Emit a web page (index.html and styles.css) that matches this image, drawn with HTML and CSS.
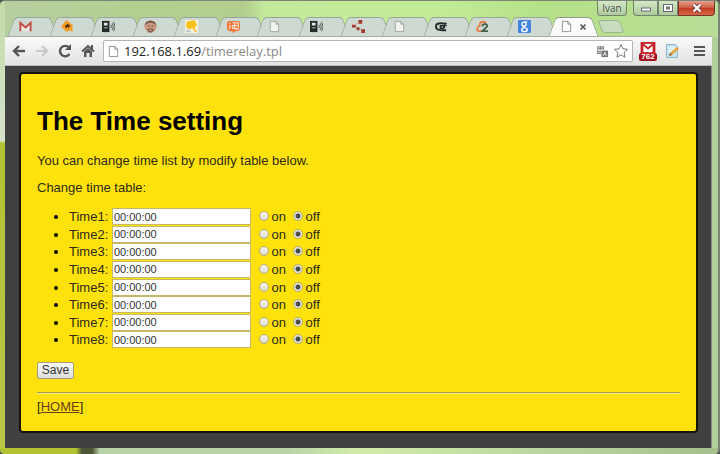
FILE: index.html
```
<!DOCTYPE html>
<html lang="en">
<head>
  <meta charset="UTF-8">
  <meta name="viewport" content="width=device-width, initial-scale=1.0">
  <title>Time setting</title>
  <link rel="stylesheet" href="styles.css">
</head>
<body>
  <div class="window">
    <div class="window-controls">
      <button class="user">Ivan</button>
      <div class="caption-buttons">
        <button aria-label="Minimize"><svg width="12" height="10" viewBox="0 0 12 10"><rect x="1.500" y="5" width="9" height="3" fill="#fff" stroke="#667" /></svg></button>
        <button class="maximize" aria-label="Maximize"><svg width="12" height="10" viewBox="0 0 12 10"><rect x="1.500" y="1.500" width="9" height="7" fill="#fff" stroke="#667" /><rect x="4.500" y="4" width="3" height="2" fill="#9b9" stroke="#667" /></svg></button>
        <button class="close" aria-label="Close"><svg width="12" height="10" viewBox="0 0 12 10"><path d="M2.500 1.500l7 7m0-7l-7 7" stroke="#744" stroke-width="4" /><path d="M2.500 1.500l7 7m0-7l-7 7" stroke="#fff" stroke-width="2.200" /></svg></button>
      </div>
    </div>

    <div class="tab-strip">
      <div class="tab"><svg viewBox="0 0 14 14"><path d="M1.500 12V3L7 8l5.500-5v9" fill="#e8e8e4" stroke="#c4483c" stroke-width="2" /></svg></div>
      <div class="tab"><svg viewBox="0 0 14 14"><path d="M6 0l7 6-1 2 1 5-4-2-3 2-6-6z" fill="#f29a26" /><path d="M4 7l3-3 3 2-2 3-1-2-1 2z" fill="#5a3010" /></svg></div>
      <div class="tab"><svg viewBox="0 0 14 14"><path d="M0 1h8v12H0z" fill="#222b28" /><path d="M2 3h4v3H2zM2 8h4v1H2z" fill="#dfe8e4" /><path d="M9.500 5q1.500 2 0 4M11 3.500q2.500 3.500 0 7M12.500 2q3 5 0 10" fill="none" stroke="#4a5450" /></svg></div>
      <div class="tab"><svg viewBox="0 0 14 14"><circle cx="7" cy="7" r="6.500" fill="#cf9b80" /><path d="M.5 7Q1 .5 7 .5T13.500 7q-2-4-6.500-4T.5 7z" fill="#75594c" /><path d="M4 6.500h2m2 0h2" stroke="#604034" /><path d="M3 10q4-2 8 0l-2 3.500H5z" fill="#85604f" /><path d="M5 11h4" stroke="#d8a892" /></svg></div>
      <div class="tab"><svg viewBox="0 0 14 14"><path d="M0 0h14v14H0z" fill="#f3f0dc" /><path d="M2 2l8-2 3 5-3 4 3 3-2 1-3-4-5 1-2-4z" fill="#f7c21c" /><path d="M1 11h5v2H1z" fill="#b8c8cc" /></svg></div>
      <div class="tab"><svg viewBox="0 0 14 14"><path d="M2 1h10q2 0 2 3v5q0 3-3 3H9l-3 2v-2H3q-3 0-3-3V4q0-3 2-3z" fill="#ef7435" /><path d="M2 3l2 1M2 6l2 1-2 3M6 3h6v7H9M5 6h6M8 4v5M6 7v2h4" fill="none" stroke="#fff" /></svg></div>
      <div class="tab"><svg viewBox="0 0 14 14"><path d="M2.500 1.500h6l3 3v8h-9zM8.500 1.500v3h3" fill="#f1f3ee" stroke="#a0a8a3" /></svg></div>
      <div class="tab"><svg viewBox="0 0 14 14"><path d="M0 1h8v12H0z" fill="#222b28" /><path d="M2 3h4v3H2zM2 8h4v1H2z" fill="#dfe8e4" /><path d="M9.500 5q1.500 2 0 4M11 3.500q2.500 3.500 0 7M12.500 2q3 5 0 10" fill="none" stroke="#4a5450" /></svg></div>
      <div class="tab"><svg viewBox="0 0 14 14"><path d="M2 6l7-4M2 6l4 3 6 2" stroke="#d3b0aa" /><path d="M0 5h4v3H0zM7 0h4v4H7zM5 8h3v3H5zM10 10h4v4h-4z" fill="#a33a30" /></svg></div>
      <div class="tab"><svg viewBox="0 0 14 14"><path d="M2.500 1.500h6l3 3v8h-9zM8.500 1.500v3h3" fill="#f1f3ee" stroke="#a0a8a3" /></svg></div>
      <div class="tab"><svg viewBox="0 0 14 14"><path d="M12 4Q1 2 1 7t11 4M10 9V6H6v3h4" fill="none" stroke="#252b29" stroke-width="2" /><path d="M8 4h5M9 6h4" stroke="#252b29" /></svg></div>
      <div class="tab"><svg viewBox="0 0 14 14"><path d="M6 12H3q-3-1-1-4 1-2 2-2 0-5 5-4l2 2" fill="none" stroke="#e47b45" stroke-width="2" /><path d="M7 7q0-3 3-2.500 3 .5 1.500 3L7 12h6" fill="none" stroke="#43604a" stroke-width="2" /></svg></div>
      <div class="tab"><svg viewBox="0 0 14 14"><rect width="14" height="14" rx="1" fill="#4583e0" /><circle cx="6.500" cy="4.500" r="2.200" fill="none" stroke="#fff" stroke-width="1.500" /><path d="M7 7q-2 0-.5 1.200M10 2H7" fill="none" stroke="#fff" stroke-width="1.500" /><ellipse cx="7" cy="10.500" rx="3" ry="2" fill="none" stroke="#fff" stroke-width="1.500" /></svg></div>
      <div class="tab active">
        <svg viewBox="0 0 14 14"><path d="M2.500 1.500h6l3 3v8h-9zM8.500 1.500v3h3" fill="#fff" stroke="#8c8c8c" /></svg>
        <button class="tab-close" aria-label="Close tab"><svg viewBox="0 0 8 8"><path d="M1.500 1.500l5 5m0-5l-5 5" stroke="#555" stroke-width="1.600" /></svg></button>
      </div>
      <button class="new-tab" aria-label="New tab"></button>
    </div>

    <div class="toolbar">
      <button aria-label="Back"><svg viewBox="0 0 16 16"><path d="M14 8H3M8 3L3 8l5 5" fill="none" stroke="#555" stroke-width="2.400" /></svg></button>
      <button aria-label="Forward"><svg viewBox="0 0 16 16"><path d="M2 8h11M8 3l5 5-5 5" fill="none" stroke="#c8c8c8" stroke-width="2.200" /></svg></button>
      <button aria-label="Reload"><svg viewBox="0 0 16 16"><path d="M12.500 11A5.200 5.200 0 1 1 12 4.500" fill="none" stroke="#555" stroke-width="2.400" /><path d="M14 1v6H8z" fill="#555" /></svg></button>
      <button aria-label="Home"><svg viewBox="0 0 16 16"><path d="M2 8.500L8 3l6 5.500M12 6V2" fill="none" stroke="#555" stroke-width="2" /><path d="M4 8.500L8 5l4 3.500V14H9.500v-4h-3v4H4z" fill="#555" /></svg></button>
      <div class="address-bar">
        <svg class="page-icon" viewBox="0 0 14 14"><path d="M2.500 1.500h6l3 3v8h-9zM8.500 1.500v3h3" fill="#fff" stroke="#8c8c8c" /></svg>
        <div class="url">192.168.1.69<span>/timerelay.tpl</span></div>
        <svg viewBox="0 0 14 14"><path d="M7 9H2V2h6v3M3 4h4M5 2v3M3 7h3" fill="none" stroke="#888" stroke-width="1.400" /><path d="M6 6h7v7H6z" fill="#777" /><path d="M8 11.500L9.500 8l1.500 3.500" fill="none" stroke="#fff" /></svg>
        <svg class="star" viewBox="0 0 16 16"><path d="M8 1.500l1.900 4.300 4.600.5-3.400 3.200.9 4.700L8 11.900l-4 2.300.9-4.700L1.500 6.300l4.600-.5z" fill="#fff" stroke="#777" /></svg>
      </div>
      <button class="mail" aria-label="Mail, 762 unread">
        <svg viewBox="0 0 16 13"><path d="M0 0h16v13H0z" fill="#c6202a" /><path d="M2 2h12v9H2z" fill="#fff" /><path d="M2 12V2l6 5 6-5v10" fill="none" stroke="#c6202a" stroke-width="2" /></svg>
        <span>762</span>
      </button>
      <button aria-label="Notes"><svg viewBox="0 0 16 16"><path d="M2.500 1.500h9l2 2v11h-11z" fill="#c7e4f3" stroke="#8fb6cb" /><path d="M4 5h7M4 8h7" stroke="#f4fbff" stroke-width="1.500" /><path d="M5 13l1-3 7-6 2 2-7 6z" fill="#e9a63c" /><path d="M5 13l1-3 2 2z" fill="#75624a" /></svg></button>
      <button class="menu" aria-label="Menu"><svg viewBox="0 0 16 16"><path d="M3 4h11M3 8h11M3 12h11" stroke="#555" stroke-width="2" /></svg></button>
    </div>

    <div class="page">
      <main class="card">
        <h1>The Time setting</h1>
        <p>You can change time list by modify table below.</p>
        <p>Change time table:</p>
        <form>
          <ul>
            <li>
              <label for="time1">Time1:</label>
              <input type="text" id="time1" value="00:00:00">
              <label class="choice"><input type="radio" name="relay1">on</label>
              <label class="choice"><input type="radio" name="relay1" checked>off</label>
            </li>
            <li>
              <label for="time2">Time2:</label>
              <input type="text" id="time2" value="00:00:00">
              <label class="choice"><input type="radio" name="relay2">on</label>
              <label class="choice"><input type="radio" name="relay2" checked>off</label>
            </li>
            <li>
              <label for="time3">Time3:</label>
              <input type="text" id="time3" value="00:00:00">
              <label class="choice"><input type="radio" name="relay3">on</label>
              <label class="choice"><input type="radio" name="relay3" checked>off</label>
            </li>
            <li>
              <label for="time4">Time4:</label>
              <input type="text" id="time4" value="00:00:00">
              <label class="choice"><input type="radio" name="relay4">on</label>
              <label class="choice"><input type="radio" name="relay4" checked>off</label>
            </li>
            <li>
              <label for="time5">Time5:</label>
              <input type="text" id="time5" value="00:00:00">
              <label class="choice"><input type="radio" name="relay5">on</label>
              <label class="choice"><input type="radio" name="relay5" checked>off</label>
            </li>
            <li>
              <label for="time6">Time6:</label>
              <input type="text" id="time6" value="00:00:00">
              <label class="choice"><input type="radio" name="relay6">on</label>
              <label class="choice"><input type="radio" name="relay6" checked>off</label>
            </li>
            <li>
              <label for="time7">Time7:</label>
              <input type="text" id="time7" value="00:00:00">
              <label class="choice"><input type="radio" name="relay7">on</label>
              <label class="choice"><input type="radio" name="relay7" checked>off</label>
            </li>
            <li>
              <label for="time8">Time8:</label>
              <input type="text" id="time8" value="00:00:00">
              <label class="choice"><input type="radio" name="relay8">on</label>
              <label class="choice"><input type="radio" name="relay8" checked>off</label>
            </li>
          </ul>
          <button class="save">Save</button>
        </form>
        <hr>
        <div class="footer">[<a href="#">HOME</a>]</div>
      </main>
    </div>
  </div>
</body>
</html>
```
FILE: styles.css
```
* {
  box-sizing: border-box;
}

body {
  margin: 0;
  background: #4a5048;
  font-family: "Liberation Sans", Arial, sans-serif;
  font-size: 13px;
}

button {
  padding: 0;
  border: none;
  background: none;
  font-family: inherit;
}

svg {
  display: block;
}

/* Window frame */
.window {
  display: flex;
  flex-direction: column;
  min-height: 100vh;
  padding: 0 6px 6px 5px;
  border: solid #7c8478;
  border-width: 1px 2px 0 0;
  border-radius: 5px;
  background:
    linear-gradient(90deg, #b3c233 76px, #4d5636 82px, #4d5636 92px, #b9d4a8 100px, #b9d4a8 40%, #d3eca9 50%, #c0dba2 70%, #a5bf8c) left bottom / 100% 6px no-repeat,
    linear-gradient(#c3dba6 0, #d5e2cd 140px, #b3c233 142px, #b8c64a 100%) left top / 5px 100% no-repeat,
    linear-gradient(90deg, #b7cfa0, #b3d08f 20%, #b3cd8f 34%, #c3ea9b 37%, #c3ec98 60%, #b5e188 75%, #b9de97) left top / 100% 36px no-repeat,
    #b2cf9a;
}

.window-controls {
  display: flex;
  justify-content: flex-end;
  gap: 6px;
  height: 16px;
  margin-right: -3px;
}

.window-controls button {
  height: 15px;
  border: 1px solid #71836b;
  border-top: none;
  background: linear-gradient(#d3e8c6, #aecb9b);
}

.window-controls .user {
  width: 30px;
  border-radius: 0 0 4px 4px;
  color: #39442f;
  font-family: "Open Sans", sans-serif;
  font-size: 10px;
  line-height: 12px;
  text-shadow: 0 0 2px #fff;
}

.caption-buttons {
  display: flex;
}

.caption-buttons button {
  display: flex;
  align-items: center;
  justify-content: center;
  width: 25px;
}

.caption-buttons button:first-child {
  border-bottom-left-radius: 4px;
}

.caption-buttons .maximize {
  width: 20px;
}

.caption-buttons .close {
  width: 37px;
  border-color: #7a352b;
  border-bottom-right-radius: 4px;
  background: linear-gradient(#e3a08e, #cf5a41 50%, #c23a20 50%, #d8694a);
}

/* Tabs */
.tab-strip {
  display: flex;
  height: 19px;
  padding: 0 118px 0 7px;
}

.tab {
  position: relative;
  display: flex;
  flex: 1;
  align-items: center;
  padding-left: 7px;
}

.tab::before,
.tab::after {
  content: "";
  position: absolute;
  top: 0;
  bottom: 0;
  border-top: 1px solid #97a69b;
  background: #ced9d2;
}

.tab::before {
  left: -1px;
  right: 30%;
  border-left: 1px solid #97a69b;
  border-top-left-radius: 4px;
  transform: skewX(-20deg);
}

.tab::after {
  left: 30%;
  right: -1px;
  border-right: 1px solid #97a69b;
  border-top-right-radius: 4px;
  transform: skewX(20deg);
}

.tab.active::before,
.tab.active::after {
  border-color: #8f9b8c;
  background: #fafafa;
}

.tab svg {
  position: relative;
  z-index: 1;
  width: 13px;
  height: 13px;
}

.tab .tab-close {
  position: relative;
  z-index: 1;
  margin-left: 6px;
}

.tab .tab-close svg {
  width: 8px;
  height: 8px;
}

.new-tab {
  width: 22px;
  height: 13px;
  margin: 3px -28px 0 6px;
  border: 1px solid #9db58f;
  border-radius: 3px;
  background: #c9dcc0;
  transform: skewX(20deg);
}

/* Toolbar */
.toolbar {
  display: flex;
  align-items: center;
  height: 30px;
  padding: 0 5px 0 6px;
  border-top: 1px solid #a4ada0;
  border-bottom: 1px solid #b9b9b9;
  background: linear-gradient(#fafafa, #e2e2e2);
}

.toolbar > button {
  margin-right: 7px;
}

.toolbar > button svg {
  width: 16px;
  height: 16px;
}

.address-bar {
  display: flex;
  flex: 1;
  align-items: center;
  gap: 4px;
  height: 22px;
  margin-right: 6px;
  padding: 0 3px;
  border: 1px solid #b5b5b5;
  border-radius: 2px;
  background: #fff;
}

.address-bar svg {
  width: 13px;
  height: 13px;
}

.address-bar .page-icon {
  height: 15px;
}

.address-bar .star {
  width: 16px;
  height: 16px;
}

.url {
  flex: 1;
  color: #222;
  font-family: "Open Sans", sans-serif;
  font-size: 13px;
  line-height: 20px;
}

.url span {
  color: #888;
}

.toolbar .mail span {
  display: block;
  margin-top: -1px;
  border-radius: 2px;
  background: #a3141e;
  color: #fff;
  font-size: 8px;
  font-weight: bold;
  line-height: 8px;
}

.toolbar .mail svg {
  width: 18px;
  height: 12px;
}

.toolbar .menu {
  margin: 0 0 0 4px;
}

/* Page content */
.page {
  flex: 1;
  padding: 6px 13px 15px 14px;
  border-right: 1px solid #8b8f88;
  background: #404040;
}

.card {
  padding: 32px 16px 16px;
  border: 2px solid #15130a;
  border-radius: 4px;
  background: #ffe20b;
  color: #2e2a12;
}

h1 {
  margin: 0 0 17px;
  color: #000;
  font-size: 26px;
  line-height: 30px;
}

p {
  margin: 0 0 11px;
  line-height: 16px;
}

/* Eight rows share the height of the list */
ul {
  display: grid;
  grid-auto-rows: 1fr;
  height: 141px;
  margin: 12px 0 13px;
  padding-left: 32px;
}

li {
  line-height: 17px;
}

li::marker {
  color: #000;
}

input[type="text"] {
  width: 139px;
  height: 17px;
  padding: 0 1px;
  border: 1px solid #c5b86a;
  background: #fff;
  color: #333;
  font-family: inherit;
  font-size: 11px;
  vertical-align: top;
}

.choice {
  margin-left: 4px;
}

.choice + .choice {
  margin-left: 3px;
}

input[type="radio"] {
  appearance: none;
  width: 10px;
  height: 10px;
  margin: 0 3px 0 0;
  border: 1px solid #b3ab7a;
  border-radius: 50%;
  background: linear-gradient(#f6f6f0, #dcdccf);
}

input[type="radio"]:checked {
  background: radial-gradient(circle, #4b4b4b 2px, #e8e8df 3px);
}

.save {
  display: block;
  width: 37px;
  height: 17px;
  border: 1px solid #a39c74;
  border-radius: 2px;
  background: linear-gradient(#f8f8f8, #dedede);
  color: #333;
  font-size: 12px;
  line-height: 15px;
}

hr {
  height: 2px;
  margin: 13px 0 5px;
  border: none;
  border-top: 1px solid #a89b46;
  border-bottom: 1px solid #f3e9a0;
}

.footer {
  line-height: 16px;
}

.footer a {
  color: #6b3d20;
}
```
